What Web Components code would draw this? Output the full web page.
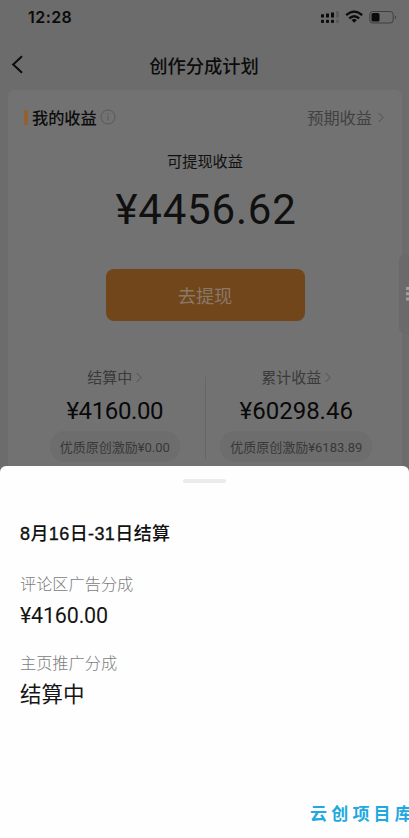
<!DOCTYPE html>
<html lang="zh-CN">
<head>
<meta charset="utf-8">
<title>创作分成计划</title>
<style>
html,body{margin:0;height:838px;overflow:hidden;background:#6c6c6c}
body{font-family:"Noto Sans CJK SC",sans-serif;color:#111}
</style>
</head>
<body>
<app-screen></app-screen>
<script>
function define(name, html) {
  const t = document.createElement('template');
  t.innerHTML = html;
  customElements.define(name, class extends HTMLElement {
    constructor() {
      super();
      this.attachShadow({mode: 'open'}).appendChild(t.content.cloneNode(true));
    }
  });
}

define('money-text', `<style>:host{display:inline;font-family:Roboto,sans-serif;line-height:0}</style><slot></slot>`);

define('status-bar', `<style>
:host{display:flex;height:34px;align-items:center;justify-content:space-between;padding:0 11px 0 28px;color:#0b0b0b}
.t{font:600 16px/34px Inter,sans-serif;letter-spacing:.45px}
svg{display:block}
</style><span class="t">12:28</span>
<svg width="78" height="16" viewBox="0 0 78 16">
<g fill="#0b0b0b"><path d="M1 5.2h3v3.3H1zM6 4.5h3v4H6zM11 3.5h3v5h-3z"/><rect x="1" y="10.8" width="3" height="3.2" rx="1"/><rect x="6" y="10.8" width="3" height="3.2" rx="1"/><rect x="11" y="10.8" width="3" height="3.2" rx="1"/></g>
<path fill="#5a5a5a" d="M16 2.3h3v6.2h-3zM16 10.8h3v3.2h-3z"/>
<g fill="none" stroke="#0b0b0b" stroke-width="2.3"><path d="M26.2 6.1q8-7 16 0"/><path d="M29.2 9.4q5-4.4 10 0"/></g><path fill="#0b0b0b" d="M34.2 13.8l-2.7-2.7q2.7-2.1 5.4 0z"/>
<rect x="49.8" y="2.5" width="23.4" height="11.5" rx="3" fill="none" stroke="#3d3d3d" stroke-width="1"/><rect x="51.5" y="4" width="8" height="8.5" rx="1.6" fill="#0b0b0b"/><path d="M75 6.4q2 1.9 0 3.8z" fill="#333"/>
</svg>`);

define('nav-bar', `<style>
:host{display:grid;grid-template-columns:40px 1fr 40px;height:56px;align-items:center}
svg{margin-left:11px;margin-top:5px}
h1{margin:6px 1px 0 0;text-align:center;font-size:18.3px;line-height:28px;font-weight:500;color:#0c0c0c}
</style><svg width="13" height="19" viewBox="0 0 13 19"><path d="M11 1.3L2.2 9.5 11 17.7" fill="none" stroke="#0c0c0c" stroke-width="2"/></svg><h1><slot></slot></h1>`);

define('chevron-icon', `<style>:host{display:inline-flex}</style>
<svg width="6" height="11" viewBox="0 0 6 11"><path d="M.7 1l4.4 4.5L.7 10" fill="none" stroke="#505050" stroke-width="1"/></svg>`);

define('card-header', `<style>
:host{display:flex;align-items:center;height:54px;padding:0 18px 0 16px}
i{width:4px;height:15px;background:#94602f;border-radius:1px;margin-right:4px}
b{font-weight:500;font-size:16.2px;line-height:24px;color:#0c0c0c}
svg{margin-left:3px}
.r{margin-left:auto;display:flex;align-items:center;gap:6px;font-size:16.2px;line-height:24px;color:#414141}
</style><i></i><b>我的收益</b>
<svg width="16" height="16" viewBox="0 0 16 16"><circle cx="8" cy="8" r="7" fill="none" stroke="#585858"/><path d="M8 7v4.5M8 4.4v1.3" stroke="#585858"/></svg>
<span class="r">预期收益<chevron-icon></chevron-icon></span>`);

define('pay-button', `<style>
:host{display:flex;width:199px;height:52px;margin:0 auto;border-radius:8px;background:#71461a;color:#8a7868;align-items:center;justify-content:center;font-size:18.2px;line-height:28px}
</style><span><slot></slot></span>`);

define('earning-stat', `<style>
:host{display:flex;flex-direction:column;align-items:center}
.l{display:flex;align-items:center;gap:4px;font-size:15px;line-height:22px;color:#3a3a3a}
.v{font-size:24px;line-height:34px;margin-top:4px;letter-spacing:var(--spacing,-.4px);color:#090909}
.p{margin-top:5px;height:31px;line-height:31px;font-size:13px;padding:0 10px;border-radius:15px;background:#6d6d6d;color:#383838;white-space:nowrap}
</style><span class="l"><slot name="label"></slot><chevron-icon></chevron-icon></span>
<span class="v"><slot></slot></span><span class="p"><slot name="note"></slot></span>`);

define('earnings-card', `<style>
:host{display:block;margin:0 7px 0 8px;height:376px;background:#727272;border-radius:6px 6px 0 0;overflow:hidden}
.s{text-align:center;font-size:15.2px;line-height:22px;margin-top:5px;color:#101010}
.n{text-align:center;font-size:42px;line-height:60px;margin:5px 0 33px 2px;letter-spacing:.8px;color:#101010}
.g{display:grid;grid-template-columns:1fr 1px 1fr;margin-top:45px;align-items:start}
.d{height:82px;margin-top:11px;background:#666}
earning-stat{margin-left:17px}
earning-stat.b{margin:0 15px 0 0;--spacing:0}
</style><card-header></card-header>
<div class="s">可提现收益</div><div class="n"><money-text>¥4456.62</money-text></div>
<pay-button>去提现</pay-button>
<div class="g"><earning-stat><span slot="label">结算中</span><money-text>¥4160.00</money-text><span slot="note">优质原创激励<money-text>¥0.00</money-text></span></earning-stat>
<div class="d"></div>
<earning-stat class="b"><span slot="label">累计收益</span><money-text>¥60298.46</money-text><span slot="note">优质原创激励<money-text>¥6183.89</money-text></span></earning-stat></div>`);

define('settlement-item', `<style>
:host{display:block;margin-bottom:15px}
.l{font-size:16.2px;line-height:24px;color:#7c7c7c;font-weight:300}
.v{font-size:21.5px;line-height:32px;margin-top:3px;color:#151515;height:37px}
</style><div class="l"><slot name="label"></slot></div><div class="v"><slot></slot></div>`);

define('bottom-sheet', `<style>
:host{display:block;box-sizing:border-box;height:372px;background:#fefefe;border-radius:6px 6px 0 0;padding:13px 20px 0;overflow:hidden}
.h{width:43px;height:4px;border-radius:2px;background:#ebebeb;margin:0 auto}
h2{margin:38px 0 25px;font:500 18px/26px "Liberation Sans","Noto Sans CJK SC",sans-serif;height:25px;letter-spacing:.4px;color:#111}
h2 span{-webkit-text-stroke:.35px #111}
</style><div class="h"></div><h2><span>8</span>月<span>16</span>日<span>-31</span>日结算</h2><slot></slot>`);

define('side-handle', `<style>
:host{position:absolute;right:0;top:254px;width:10px;height:80px;background:#6a6a6a;border-radius:7px 0 0 7px;display:flex;align-items:center;justify-content:flex-end}
</style><svg width="4" height="16" viewBox="0 0 4 16"><path d="M1 1h3v3H1zM1 6.3h3v3H1zM1 11.6h3v3H1z" fill="#a0a0a0"/></svg>`);

define('water-mark', `<style>
:host{position:absolute;left:310px;top:800px;width:99px;overflow:hidden;white-space:nowrap;font-size:17px;line-height:26px;font-weight:700;letter-spacing:4.2px;color:#1ea9e0}
</style><slot></slot>`);

define('app-screen', `<style>
:host{display:block;position:relative;width:409px;height:838px;overflow:hidden;background:#6c6c6c}
</style><status-bar></status-bar><nav-bar>创作分成计划</nav-bar><earnings-card></earnings-card>
<bottom-sheet><settlement-item><span slot="label">评论区广告分成</span><money-text style="letter-spacing:-.2px">¥4160.00</money-text></settlement-item>
<settlement-item><span slot="label">主页推广分成</span>结算中</settlement-item></bottom-sheet>
<side-handle></side-handle><water-mark>云创项目库</water-mark>`);
</script>
</body>
</html>
